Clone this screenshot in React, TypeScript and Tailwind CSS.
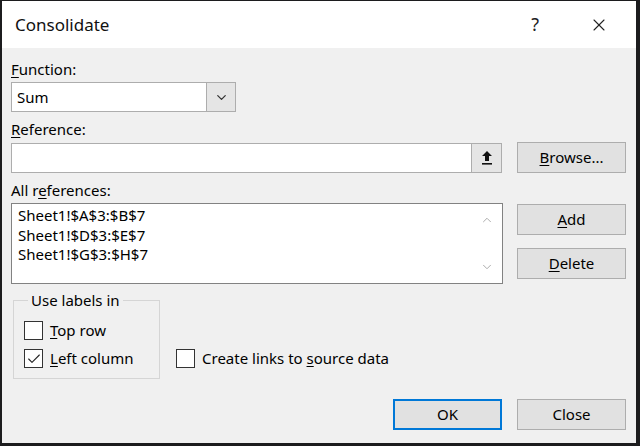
import { Check, ChevronDown, ChevronUp, X } from "lucide-react";

const font = { fontFamily: '"Noto Sans", "Open Sans", sans-serif' };

const Key = ({ children }: { children: string }) => <span className="underline underline-offset-2">{children}</span>;

const Button = ({ children, primary }: { children: React.ReactNode; primary?: boolean }) => (
  <button
    type="button"
    className={`flex h-[31px] w-[109px] items-center justify-center bg-[#e1e1e1] text-[15px] text-black ${
      primary ? "border-2 border-[#0078d7]" : "border border-[#adadad]"
    }`}
  >
    {children}
  </button>
);

const Checkbox = ({ checked, children }: { checked?: boolean; children: React.ReactNode }) => (
  <label className="flex h-[19px] items-center gap-[7px] text-[15px] leading-[19px] text-black">
    <span className="flex h-[19px] w-[19px] items-center justify-center border border-[#333] bg-white">
      {checked ? <Check className="h-[16px] w-[16px] text-[#222]" strokeWidth={1.6} /> : null}
    </span>
    {children}
  </label>
);

export default function App() {
  return (
    <div className="h-[446px] w-[640px] bg-[#1c1c1e] pb-[3px] pl-[2px] pr-[4px] pt-[1px]" style={font}>
      <div className="flex h-full flex-col bg-[#f0f0f0]">
        <div className="flex h-[47px] items-center bg-white pl-[13px] pr-[27px]">
          <span className="text-[17px] text-[#111]">Consolidate</span>
          <span className="ml-auto mr-[50px] text-[18px] text-[#222]">?</span>
          <X className="h-[20px] w-[20px] text-[#222]" strokeWidth={1.3} />
        </div>

        <div className="flex flex-col pl-[9px] pr-[10px]">
          <div className="mt-[11px] h-[20px] text-[15px] leading-[20px] text-black">
            <Key>F</Key>unction:
          </div>
          <div className="mt-[3px] flex h-[30px] w-[225px] border border-[#adadad] bg-white">
            <span className="flex-1 pl-[5px] text-[15px] leading-[28px] text-black">Sum</span>
            <span className="flex w-[29px] items-center justify-center border-l border-[#adadad] bg-[#e5e5e5]">
              <ChevronDown className="h-[15px] w-[15px] text-[#333]" strokeWidth={2} />
            </span>
          </div>

          <div className="mt-[7px] h-[20px] text-[15px] leading-[20px] text-black">
            <Key>R</Key>eference:
          </div>
          <div className="mt-[3px] flex items-center gap-[15px]">
            <div className="flex h-[30px] flex-1 border border-[#adadad] bg-white">
              <span className="flex-1" />
              <span className="flex w-[30px] items-center justify-center border-l border-[#adadad] bg-[#e5e5e5]">
                <svg width="12" height="15" viewBox="0 0 12 15">
                  <path d="M6 1 L1 6 H4 V11 H8 V6 H11 Z" fill="#111" />
                  <rect x="1" y="13" width="10" height="1.6" fill="#111" />
                </svg>
              </span>
            </div>
            <Button>
              <span>
                <Key>B</Key>rowse...
              </span>
            </Button>
          </div>

          <div className="mt-[7px] h-[20px] text-[15px] leading-[20px] text-black">
            All r<Key>e</Key>ferences:
          </div>
          <div className="mt-[3px] flex gap-[14px]">
            <div className="flex h-[81px] flex-1 border border-[#828282] bg-white">
              <div className="flex-1 pl-[6px] pt-[2px] text-[15px] leading-[19.5px] text-black">
                <div>Sheet1!$A$3:$B$7</div>
                <div>Sheet1!$D$3:$E$7</div>
                <div>Sheet1!$G$3:$H$7</div>
              </div>
              <div className="flex w-[30px] flex-col items-center justify-between py-[9px]">
                <ChevronUp className="h-[14px] w-[14px] text-[#a0a0a0]" strokeWidth={1.5} />
                <ChevronDown className="h-[14px] w-[14px] text-[#a0a0a0]" strokeWidth={1.5} />
              </div>
            </div>
            <div className="mt-[1px] flex flex-col gap-[13px]">
              <Button>
                <span>
                  <Key>A</Key>dd
                </span>
              </Button>
              <Button>
                <span>
                  <Key>D</Key>elete
                </span>
              </Button>
            </div>
          </div>

          <div className="mt-[7px] flex items-end gap-[16px]">
            <fieldset className="ml-[2px] w-[147px] border border-[#d5d5d5] pb-[10px] pl-[10px] pt-[12px]">
              <legend className="ml-[4px] px-[3px] text-[15px] leading-[18px] text-black">Use labels in</legend>
              <div className="flex flex-col gap-[9px]">
                <Checkbox>
                  <span>
                    <Key>T</Key>op row
                  </span>
                </Checkbox>
                <Checkbox checked>
                  <span>
                    <Key>L</Key>eft column
                  </span>
                </Checkbox>
              </div>
            </fieldset>
            <div className="pb-[11px]">
              <Checkbox>
                <span>
                  Create links to <Key>s</Key>ource data
                </span>
              </Checkbox>
            </div>
          </div>

          <div className="mt-[20px] flex justify-end gap-[15px]">
            <Button primary>OK</Button>
            <Button>Close</Button>
          </div>
        </div>
      </div>
    </div>
  );
}
